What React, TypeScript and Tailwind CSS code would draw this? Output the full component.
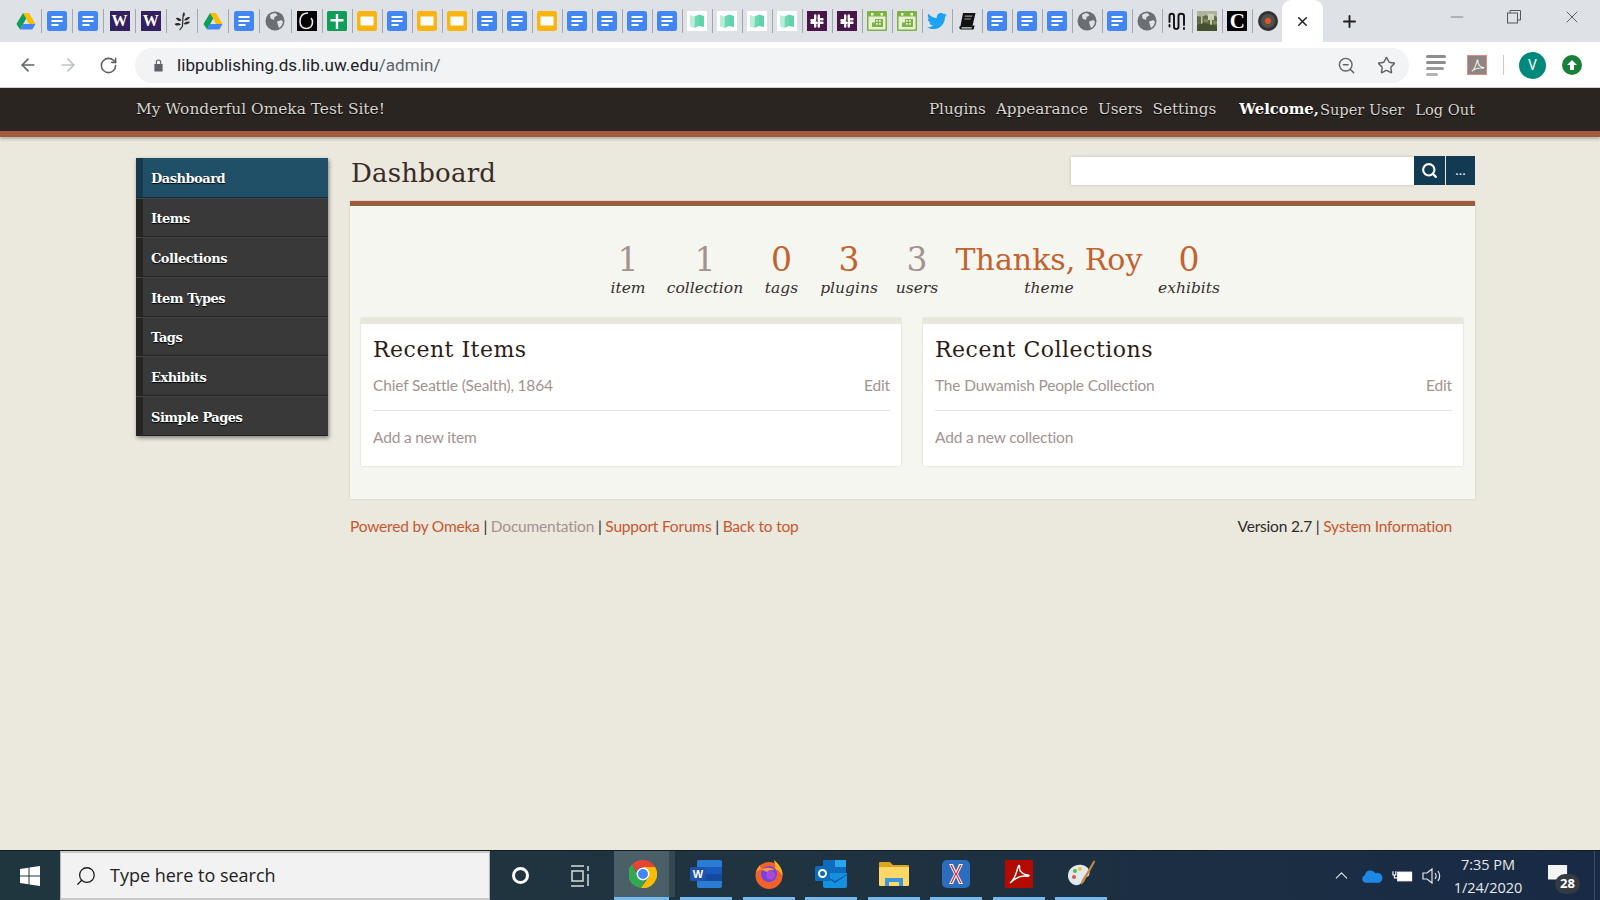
import { ArrowLeft, ArrowRight, ChevronUp, Minus, Plus, RotateCw, Search, Star, X, ZoomOut } from "lucide-react";
import { FaTwitter } from "react-icons/fa";

const slab = "font-['DejaVu_Serif','Liberation_Serif',serif]";
const body = "font-['Lato','Open_Sans',sans-serif]";

function Drive() {
  return (
    <svg viewBox="0 0 20 20" className="h-5 w-5">
      <path d="M7 2h6l6.500 11h-6.500z" fill="#fbbc04" />
      <path d="M7 2l3.200 5.500L4 18.500 0.500 13z" fill="#0f9d58" />
      <path d="M4 18.500l3-5.500h12.500L16.300 18.500z" fill="#4285f4" />
    </svg>
  );
}

function Doc() {
  return (
    <svg viewBox="0 0 20 20" className="h-5 w-5">
      <rect x="0" y="0" width="20" height="20" rx="2.500" fill="#4285f4" />
      <path d="M4.500 5h11v2h-11zM4.500 9h11v2h-11zM4.500 13h7v2h-7z" fill="#fff" />
    </svg>
  );
}

function Slides() {
  return (
    <svg viewBox="0 0 20 20" className="h-5 w-5">
      <rect x="0" y="0" width="20" height="20" rx="2.500" fill="#f9b40f" />
      <rect x="3.500" y="5.500" width="13" height="9" fill="#fff" />
    </svg>
  );
}

function UW() {
  return (
    <div className="flex h-5 w-5 items-center justify-center bg-[#33205f] font-['Liberation_Serif',serif] text-[16px] font-bold text-white">
      W
    </div>
  );
}

function Plant() {
  return (
    <svg viewBox="0 0 20 20" className="h-5 w-5" fill="#2a2a2a">
      <path d="M12 1c1.500 2 1 4-1 5.500C10 5 10.500 2.500 12 1zM4 7c2.500-.5 4.500.5 5.500 2.500C7 10.500 5 9.500 4 7zM18 6c-1 2.500-3 4-6 3.500C13 7 15.500 5.500 18 6zM2.500 13c2.500-1.500 5-1 6.500.5-2.500 1.500-5 1.500-6.500-.5zM18 11c-1.500 2-4 3-6.500 2 1.500-2 4-3 6.500-2zM10.500 5h1.200l-.7 10.500L8 19.500l-.8-.7 2.600-3.600z" />
    </svg>
  );
}

function Globe() {
  return (
    <svg viewBox="0 0 20 20" className="h-5 w-5">
      <circle cx="10" cy="10" r="9.500" fill="#6b6f74" />
      <path d="M5 4c2-1.500 4-2 6-1.500l1.500 2-3 1.500-.5 3-3.500-1.500zM12 10.500l4.500-1.500 1.500 2c-.5 3-2 5-4 6l-1.200-3.200z" fill="#dee1e6" />
    </svg>
  );
}

function SwirlG() {
  return (
    <svg viewBox="0 0 20 20" className="h-5 w-5">
      <rect width="20" height="20" fill="#000" />
      <path d="M11 2C5 2 3 6 3 10.500 3 15 5.500 17.500 9.500 17.500c3.500 0 6-2.500 6-6.500 0-1.500-.5-3-1.500-4" fill="none" stroke="#e8e8e8" strokeWidth="1.600" />
    </svg>
  );
}

function LetterC() {
  return (
    <div className="flex h-5 w-5 items-center justify-center bg-black font-['Liberation_Serif',serif] text-[21px] leading-none font-bold text-white">
      C
    </div>
  );
}

function GreenCross() {
  return (
    <svg viewBox="0 0 20 20" className="h-5 w-5">
      <rect width="20" height="20" rx="1.500" fill="#0f9d58" />
      <path d="M8.800 3h2.400v5h5.300v2.400h-5.300V18H8.800v-7.600H3.500V8h5.300z" fill="#fff" />
    </svg>
  );
}

function MapFold() {
  return (
    <svg viewBox="0 0 20 20" className="h-5 w-5">
      <rect width="20" height="20" fill="#fff" />
      <path d="M3 4l4.500 1.500v11.500L3 15.500z" fill="#b9ecd9" />
      <path d="M7.500 5.500L12 3.500v11.500l-4.500 2z" fill="#6fd8b2" />
      <path d="M12 3.500l5 1.500v11l-5-1z" fill="#5fd3a9" />
    </svg>
  );
}

function Slack() {
  return (
    <svg viewBox="0 0 20 20" className="h-5 w-5">
      <rect width="20" height="20" fill="#4a154b" />
      <g fill="none" stroke="#fff" strokeWidth="2.400" strokeLinecap="round">
        <path d="M8.200 4.500v3.500M11.800 4.500v5M4.500 9.200h3.500M15.500 8.200h-1.500M4.500 11.800h5M11.800 11.800h3.700M8.200 15.500v-1.500M11.800 12.500v3" />
      </g>
    </svg>
  );
}

function Calendar() {
  return (
    <svg viewBox="0 0 20 20" className="h-5 w-5">
      <rect width="20" height="20" rx="1" fill="#7cb342" />
      <rect x="1.500" y="5.500" width="17" height="13" fill="#e8efd8" />
      <path d="M4 2h2.500v2.500H4zM13.500 2H16v2.500h-2.500z" fill="#eef3e2" />
      <path d="M8 8h8v8H5v-4.500h3zM9 9v1.800h1.800V9zM12 9v1.800h1.800V9zM9 12v1.800h1.800V12zM12 12v1.800h1.800V12z" fill="#7cb342" />
    </svg>
  );
}

function Book() {
  return (
    <svg viewBox="0 0 20 20" className="h-5 w-5">
      <path d="M6 2h12.500l-3 13H3.500z" fill="#111" />
      <path d="M3.500 15H16l1-1 .5 1-1 3.500H4c-2 0-2-3.500-.5-3.500z" fill="#111" />
      <path d="M4.500 16.200H15l-.5 1.300H4.500z" fill="#ddd" />
      <path d="M8 4.500h7.500l-.3 1.300H7.700zM7.500 7.500h6.500l-.3 1.100H7.200z" fill="#999" />
    </svg>
  );
}

function MTrail() {
  return (
    <svg viewBox="0 0 20 20" className="h-5 w-5" fill="none" stroke="#111" strokeWidth="1.900" strokeLinecap="round">
      <path d="M2.500 11V5c0-3 4.500-3 4.500 0v11c0 2.500 4.500 2.500 4.500 0V5c0-3 5.500-3 5.500 0v9" />
      <path d="M2.500 14v1.500M17 17v1" />
    </svg>
  );
}

function Photo() {
  return (
    <svg viewBox="0 0 20 20" className="h-5 w-5">
      <rect width="20" height="20" fill="#5f6b48" />
      <path d="M0 0h20v6l-4-2-3 3-4-3-4 2-5-1z" fill="#aeb59c" />
      <path d="M11 3h6v6h-6z" fill="#cfd2c0" />
      <path d="M4 6h1.500v14H4zM13 6h2v14h-2z" fill="#cbc3a8" />
      <path d="M0 14l7-2 13 3v5H0z" fill="#46502f" />
      <path d="M7 8h4v3H7zM16 10h4v3h-4z" fill="#7c8a5e" />
    </svg>
  );
}

function Vinyl() {
  return (
    <svg viewBox="0 0 20 20" className="h-5 w-5">
      <circle cx="10" cy="10" r="10" fill="#333" />
      <circle cx="10" cy="10" r="7" fill="#505050" />
      <circle cx="10" cy="10" r="3" fill="#e2571e" />
    </svg>
  );
}

const favicons = [
  "drive", "doc", "doc", "uw", "uw", "plant", "drive", "doc", "globe", "g", "cross", "slides", "doc", "slides",
  "slides", "doc", "doc", "slides", "doc", "doc", "doc", "doc", "map", "map", "map", "map", "slack", "slack",
  "cal", "cal", "twitter", "book", "doc", "doc", "doc", "globe", "doc", "globe", "m", "photo", "c", "vinyl",
];

function Favicon({ kind }: { kind: string }) {
  switch (kind) {
    case "drive":
      return <Drive />;
    case "doc":
      return <Doc />;
    case "uw":
      return <UW />;
    case "plant":
      return <Plant />;
    case "globe":
      return <Globe />;
    case "g":
      return <SwirlG />;
    case "cross":
      return <GreenCross />;
    case "slides":
      return <Slides />;
    case "map":
      return <MapFold />;
    case "slack":
      return <Slack />;
    case "cal":
      return <Calendar />;
    case "twitter":
      return <FaTwitter className="h-5 w-5 text-[#1da1f2]" />;
    case "book":
      return <Book />;
    case "m":
      return <MTrail />;
    case "photo":
      return <Photo />;
    case "c":
      return <LetterC />;
    default:
      return <Vinyl />;
  }
}

function TabStrip() {
  return (
    <div className="flex h-[42px] shrink-0 items-center bg-[#dee1e6] pl-[10.900px]">
      {favicons.map((kind, i) => (
        <div
          key={i}
          className={
            i === favicons.length - 1
              ? "flex h-6 w-[30px] items-center justify-center"
              : i < 10
                ? "flex h-6 w-[31.200px] items-center justify-center border-r border-[#a3a6aa]"
                : "flex h-6 w-[30px] items-center justify-center border-r border-[#a3a6aa]"
          }
        >
          <Favicon kind={kind} />
        </div>
      ))}
      <div className="ml-[-1px] flex h-[42px] w-[41px] items-center justify-center rounded-t-[9px] bg-white">
        <X className="h-[15px] w-[15px] text-[#202124]" strokeWidth={2.400} />
      </div>
      <Plus className="ml-[17px] h-[19px] w-[19px] text-[#202124]" strokeWidth={2.400} />
      <div className="ml-auto flex items-start self-start pt-[7px] text-[#6f7276]">
        <Minus className="mr-[40px] h-[20px] w-[20px]" strokeWidth={1} />
        <svg viewBox="0 0 14 14" className="mr-[41px] mt-[3px] h-[14px] w-[14px]" fill="none" stroke="#55585c" strokeWidth="1">
          <rect x="0.500" y="3" width="10" height="10" />
          <path d="M3 3V0.500h10.500V10H10.500" />
        </svg>
        <X className="mr-[18px] h-[20px] w-[20px] text-[#44474b]" strokeWidth={1} />
      </div>
    </div>
  );
}

function Toolbar() {
  return (
    <div className="flex h-[46px] shrink-0 items-center border-b border-[#cfd1d4] bg-white pl-[18px] pt-px font-['Roboto',sans-serif]">
      <ArrowLeft className="h-5 w-5 text-[#5f6368]" strokeWidth={2} />
      <ArrowRight className="ml-[20px] h-5 w-5 text-[#bdc1c6]" strokeWidth={2} />
      <RotateCw className="ml-[21px] h-[19px] w-[19px] text-[#5f6368]" strokeWidth={2} />
      <div className="ml-[17px] flex h-[35px] w-[1274px] items-center rounded-full bg-[#f1f3f4] pl-[18px]">
        <svg viewBox="0 0 12 14" className="h-[14px] w-[11px]" fill="#5f6368">
          <path d="M3 6V4a3 3 0 0 1 6 0v2h1.500v8h-9V6zm1.200 0h3.600V4a1.800 1.800 0 0 0-3.600 0z" />
        </svg>
        <span className="ml-[13px] text-[17px] leading-none tracking-[0.100px] text-[#202124]">
          libpublishing.ds.lib.uw.edu<span className="text-[#5f6368]">/admin/</span>
        </span>
        <ZoomOut className="ml-auto h-[19px] w-[19px] text-[#5f6368]" strokeWidth={1.800} />
        <Star className="ml-[21px] mr-[13px] h-[19px] w-[19px] text-[#5f6368]" strokeWidth={1.800} />
      </div>
      <div className="ml-[17px] flex w-[20px] flex-col gap-[3px]">
        <div className="h-[3px] w-[20px] rounded-full bg-[#8d8d8d]" />
        <div className="h-[3px] w-[20px] rounded-full bg-[#8d8d8d]" />
        <div className="h-[3px] w-[18px] rounded-full bg-[#9a9a9a]" />
        <div className="h-[3px] w-[12px] rounded-full bg-[#b5b5b5]" />
      </div>
      <div className="ml-[21px] flex h-5 w-5 items-center justify-center border border-[#e58a7e] bg-[#8e8583]">
        <svg viewBox="0 0 16 16" className="h-[15px] w-[15px]" fill="none" stroke="#f0eeee" strokeWidth="1.200">
          <path d="M2 14c2-1 4-5 5.500-11 .3-1.500 1.200-1 1 .5C8.200 7 11 10 14 10c1 0 1 1-.5 .8C10 10.500 5 11.500 2 14z" />
        </svg>
      </div>
      <div className="ml-[16px] h-[20px] w-px bg-[#c8cacc]" />
      <div className="ml-[15px] flex h-[27px] w-[27px] items-center justify-center rounded-full bg-[#00897b] text-[14px] text-white">
        V
      </div>
      <div className="ml-[16px] flex h-5 w-5 items-center justify-center rounded-full bg-[#188038]">
        <svg viewBox="0 0 12 12" className="h-3 w-3" fill="#fff">
          <path d="M6 1l5 5H8v5H4V6H1z" />
        </svg>
      </div>
    </div>
  );
}

function TopNav() {
  return (
    <div className={`flex h-[49px] shrink-0 items-center justify-between border-b-[6px] border-[#a05a3e] bg-[#2b2522] pl-[136px] pr-[125px] text-[#d9d5cf] shadow-[0_2px_3px_rgba(0,0,0,0.25)] [text-shadow:0_1px_1px_#000] ${slab}`}>
      <span className="text-[15.400px]">My Wonderful Omeka Test Site!</span>
      <div className="flex items-center text-[15.200px]">
        <span>Plugins</span>
        <span className="ml-[10px]">Appearance</span>
        <span className="ml-[10px]">Users</span>
        <span className="ml-[10px]">Settings</span>
        <span className="ml-[23px] text-[14.800px] font-bold text-white">Welcome,</span>
        <span className="ml-[1px] text-[14.600px]">Super User</span>
        <span className="ml-[11px] text-[14.600px]">Log Out</span>
      </div>
    </div>
  );
}

const menu = ["Dashboard", "Items", "Collections", "Item Types", "Tags", "Exhibits", "Simple Pages"];

function Sidebar() {
  return (
    <div className={`mt-[21px] w-[192px] shrink-0 self-start shadow-[1px_2px_4px_rgba(0,0,0,0.45)] ${slab}`}>
      {menu.map((label, i) => (
        <div
          key={label}
          className={
            i === 0
              ? "flex h-[39.700px] border-b border-[#12303f] bg-[#205068]"
              : "flex h-[39.700px] border-b border-t border-b-[#222222] border-t-[#444444] bg-[#393939]"
          }
        >
          <div className={i === 0 ? "w-[7px] bg-[#173a4c]" : "w-[7px] bg-[#262626]"} />
          <span className="ml-[8px] self-center pt-[3px] text-[13px] font-bold tracking-[-0.500px] text-white [text-shadow:0_1px_1px_#000]">
            {label}
          </span>
        </div>
      ))}
    </div>
  );
}

const stats = [
  { value: "1", label: "item", tone: "text-[33px] text-[#a39390]", width: "w-[62px]" },
  { value: "1", label: "collection", tone: "text-[33px] text-[#a39390]", width: "w-[92px]" },
  { value: "0", label: "tags", tone: "text-[33px] text-[#c4622f]", width: "w-[61px]" },
  { value: "3", label: "plugins", tone: "text-[33px] text-[#c4622f]", width: "w-[74px]" },
  { value: "3", label: "users", tone: "text-[33px] text-[#a39390]", width: "w-[62px]" },
  { value: "Thanks, Roy", label: "theme", tone: "text-[30px] text-[#c4622f]", width: "w-[202px]" },
  { value: "0", label: "exhibits", tone: "text-[33px] text-[#c4622f]", width: "w-[78px]" },
];

function Stats() {
  return (
    <div className={`mt-[33px] flex justify-center ${slab}`}>
      {stats.map((s) => (
        <div key={s.label} className={`flex flex-col items-center ${s.width}`}>
          <span className={`leading-[42px] ${s.tone}`}>{s.value}</span>
          <span className="-mt-[2px] text-[15.500px] leading-[18px] text-[#33302d] italic">{s.label}</span>
        </div>
      ))}
    </div>
  );
}

function RecentCard({ title, item, add }: { title: string; item: string; add: string }) {
  return (
    <div className="h-[148px] w-[540px] rounded-[1px] border-t-[6px] border-[#e9e7da] bg-white pl-[12px] pr-[11px] shadow-[0_0_2px_rgba(0,0,0,0.2)]">
      <h2 className={`mt-[11px] text-[22px] leading-[30px] tracking-[0.500px] text-[#2c1d18] ${slab}`}>{title}</h2>
      <div className={`mt-[8px] flex justify-between border-b border-[#e4e4e2] pb-[13px] text-[15.500px] leading-[24px] tracking-[-0.170px] text-[#a39390] ${body}`}>
        <span>{item}</span>
        <span>Edit</span>
      </div>
      <div className={`mt-[14px] text-[15.500px] leading-[24px] tracking-[-0.170px] text-[#a39390] ${body}`}>{add}</div>
    </div>
  );
}

function Content() {
  return (
    <div className="w-[1125px] shrink-0">
      <div className="flex h-[64px] items-start justify-between">
        <h1 className={`mt-[18px] ml-[1px] text-[26px] leading-[36px] tracking-[0.200px] text-[#3a2b28] ${slab}`}>Dashboard</h1>
        <div className="mt-[19px] flex">
          <div className="mt-px h-[28px] w-[343px] bg-white shadow-[0_0_3px_rgba(0,0,0,0.2)]" />
          <div className="flex h-[29px] w-[31px] items-center justify-center bg-[#123a52]">
            <Search className="h-[17px] w-[17px] text-white" strokeWidth={3} />
          </div>
          <div className="ml-px flex h-[29px] w-[29px] items-center justify-center bg-[#123a52] text-[13px] text-white">
            ...
          </div>
        </div>
      </div>
      <div className="h-[298px] border-t-[5px] border-[#a05a3e] bg-[#f6f6f1] shadow-[0_0_2px_rgba(0,0,0,0.15)]">
        <Stats />
        <div className="mt-[21px] flex gap-[22px] pl-[11px]">
          <RecentCard title="Recent Items" item="Chief Seattle (Sealth), 1864" add="Add a new item" />
          <RecentCard title="Recent Collections" item="The Duwamish People Collection" add="Add a new collection" />
        </div>
      </div>
      <div className={`mt-[15px] flex justify-between pr-[23px] text-[15.500px] leading-[24px] tracking-[-0.200px] text-[#2b2b2b] ${body}`}>
        <div>
          <span className="text-[#c8572d]">Powered by Omeka</span> | <span className="text-[#a39390]">Documentation</span> |{" "}
          <span className="text-[#c8572d]">Support Forums</span> | <span className="text-[#c8572d]">Back to top</span>
        </div>
        <div>
          Version 2.7 | <span className="text-[#c8572d]">System Information</span>
        </div>
      </div>
    </div>
  );
}

function WindowsLogo() {
  return (
    <svg viewBox="0 0 20 20" className="h-[20px] w-[20px]" fill="#fff">
      <path d="M0 3l8.500-1.200v7.700H0zM9.500 1.600L20 0v9.500H9.500zM0 10.500h8.500v7.700L0 17zM9.500 10.500H20V20L9.500 18.400z" />
    </svg>
  );
}

function ChromeIcon() {
  return (
    <svg viewBox="0 0 28 28" className="h-[28px] w-[28px]">
      <path d="M14 0a14 14 0 0 1 12.100 7H14a7 7 0 0 0-6.500 4.500L3 4.500A14 14 0 0 1 14 0z" fill="#ea4335" />
      <path d="M3 4.500l5 9a7 7 0 0 0 8 7.200L12 28A14 14 0 0 1 3 4.500z" fill="#34a853" />
      <path d="M26.100 7A14 14 0 0 1 12 28l5.500-8a7 7 0 0 0 1.300-9.500L14 7z" fill="#fbbc04" />
      <circle cx="14" cy="14" r="6.500" fill="#fff" />
      <circle cx="14" cy="14" r="5" fill="#4285f4" />
    </svg>
  );
}

function WordIcon() {
  return (
    <svg viewBox="0 0 32 28" className="h-[28px] w-[32px]">
      <rect x="7" y="0" width="25" height="28" rx="2" fill="#2b7cd3" />
      <rect x="7" y="7" width="25" height="7" fill="#185abd" />
      <rect x="7" y="14" width="25" height="7" fill="#144a9e" />
      <rect x="0" y="7" width="16" height="14" rx="1.500" fill="#1d52ae" />
      <text x="8" y="18" textAnchor="middle" fontSize="11" fontWeight="700" fill="#fff" fontFamily="Liberation Sans, sans-serif">W</text>
    </svg>
  );
}

function FirefoxIcon() {
  return (
    <svg viewBox="0 0 30 30" className="h-[30px] w-[30px]">
      <circle cx="15" cy="16.500" r="13.500" fill="#f2612a" />
      <path d="M20 1c5 4 9 9 8.500 16-2-4-4-6-7-7 0-3-1-6-1.500-9z" fill="#ffb21f" />
      <path d="M2 14c0-3 2-6 4-8 0 2 1 3 2 4-4 1-5 2-6 4z" fill="#ff9a2b" />
      <circle cx="15" cy="15" r="8" fill="#7542e5" />
      <circle cx="16.500" cy="16" r="4.500" fill="#a54bd8" />
      <path d="M7 11c4-3 10-3 14 0-4-.5-6 0-8 2-2-1-4-2-6-2z" fill="#ff9a2b" />
    </svg>
  );
}

function OutlookIcon() {
  return (
    <svg viewBox="0 0 32 28" className="h-[28px] w-[32px]">
      <rect x="8" y="0" width="23" height="14" fill="#0f6cbd" />
      <rect x="20" y="0" width="11" height="7" fill="#28a8ea" />
      <path d="M8 13h24v13a2 2 0 0 1-2 2H10a2 2 0 0 1-2-2z" fill="#1490df" />
      <path d="M8 14l12 7 12-7v1L20 23 8 15z" fill="#0a5ca8" />
      <rect x="0" y="6" width="15" height="15" rx="1.500" fill="#0f6cbd" />
      <circle cx="7.500" cy="13.500" r="3.500" fill="none" stroke="#fff" strokeWidth="2" />
    </svg>
  );
}

function FolderIcon() {
  return (
    <svg viewBox="0 0 30 26" className="h-[26px] w-[30px]">
      <path d="M0 2a1 1 0 0 1 1-1h10l3 3h15a1 1 0 0 1 1 1v4H0z" fill="#d9a520" />
      <rect x="0" y="6" width="30" height="19" rx="1" fill="#ffd766" />
      <path d="M6 25v-8h18v8h-4v-4H10v4z" fill="#3a96dd" />
    </svg>
  );
}

function XIcon() {
  return (
    <svg viewBox="0 0 28 28" className="h-[28px] w-[28px]">
      <rect width="28" height="28" rx="5" fill="#2d6dbd" />
      <path d="M7 4h4l3 7 3-7h4l-5 10 5 10h-4l-3-7-3 7H7l5-10z" fill="#f4f6fa" />
      <path d="M8.500 5H10l4 8.500L18 5h1.500L15 14l4.500 9H18l-4-8.500L10 23H8.500L13 14z" fill="#e32a27" />
    </svg>
  );
}

function PdfIcon() {
  return (
    <svg viewBox="0 0 28 28" className="h-[28px] w-[28px]">
      <rect width="28" height="28" rx="1" fill="#b30b00" />
      <path d="M5 23c3-2 6-8 8-16 .4-2 2-2 1.500 .5C14 11 18 15 23 15c1.500 0 1.500 1.500-.5 1.200C17 15.500 10 18 5 23z" fill="none" stroke="#fff" strokeWidth="1.400" />
    </svg>
  );
}

function PaletteIcon() {
  return (
    <svg viewBox="0 0 30 30" className="h-[30px] w-[30px]">
      <path d="M2 17C2 9 9 5 16 6c6 1 9 6 7 10-1 3-5 1-6 4-1 4-4 7-8 6-4-1-7-5-7-9z" fill="#dfe9ee" />
      <circle cx="8" cy="18" r="2" fill="#e8504a" />
      <circle cx="9" cy="12" r="2" fill="#5fb548" />
      <circle cx="14" cy="10" r="2" fill="#f1c232" />
      <path d="M28 1l1 2-11 20-3 3 .5-4z" fill="#c98a3c" />
    </svg>
  );
}

const taskApps = [
  { icon: <WordIcon />, width: "w-[62px]" },
  { icon: <FirefoxIcon />, width: "w-[63px]" },
  { icon: <OutlookIcon />, width: "w-[62px]" },
  { icon: <FolderIcon />, width: "w-[63px]" },
  { icon: <XIcon />, width: "w-[62px]" },
  { icon: <PdfIcon />, width: "w-[63px]" },
  { icon: <PaletteIcon />, width: "w-[62px]" },
];

function Taskbar() {
  return (
    <div className="flex h-[50px] shrink-0 items-stretch border-t border-[#141d22] bg-gradient-to-r from-[#20363f] via-[#1f3340] to-[#182a45] font-['Open_Sans',sans-serif]">
      <div className="flex w-[60px] items-center justify-center">
        <WindowsLogo />
      </div>
      <div className="flex w-[430px] items-center border-y-2 border-x border-y-[#c9c9c9] border-x-[#b5b5b5] bg-[#f2f2f2] pl-[14px]">
        <Search className="h-[22px] w-[22px] -scale-x-100 text-[#1c1c1c]" strokeWidth={1.400} />
        <span className="ml-[13px] text-[18px] text-[#222]">Type here to search</span>
      </div>
      <div className="flex w-[60px] items-center justify-center">
        <div className="h-[17px] w-[17px] rounded-full border-[3px] border-white" />
      </div>
      <div className="flex w-[60px] items-center justify-center pr-[1px]">
        <svg viewBox="0 0 20 22" className="h-[22px] w-[20px]" fill="none" stroke="#d8dcde" strokeWidth="1.500">
          <path d="M1 1h13M1 21h13M2 6h11v10H2zM18 1v5M18 9v12" />
        </svg>
      </div>
      <div className="ml-[4px] flex w-[55px] items-center justify-center border-b-[3px] border-[#76b9ed] bg-[#4b5f68] pl-[3px]">
        <ChromeIcon />
      </div>
      <div className="w-[6px] border-b-[3px] border-[#1f3340] bg-[#35484f]" />
      {taskApps.map((app, i) => (
        <div key={i} className={`flex items-center justify-center ${app.width}`}>
          <div className="flex h-full w-[52px] items-center justify-center border-b-[3px] border-[#76b9ed]">{app.icon}</div>
        </div>
      ))}
      <div className="ml-auto flex items-center text-white">
        <ChevronUp className="h-[21px] w-[21px] text-[#e6e6e6]" strokeWidth={1.300} />
        <svg viewBox="0 0 22 14" className="ml-[10px] h-[14px] w-[21px]">
          <path d="M4 14a4 4 0 0 1-1-7.800A6 6 0 0 1 14 4a4.500 4.500 0 0 1 4 10z" fill="#1e88e5" />
        </svg>
        <svg viewBox="0 0 22 14" className="ml-[9px] h-[14px] w-[21px]" fill="none" stroke="#fff" strokeWidth="1.200">
          <rect x="6" y="3" width="14.500" height="9" fill="#fff" />
          <path d="M1 2v4h3V2M2.500 6v3H6" />
        </svg>
        <svg viewBox="0 0 20 18" className="ml-[9px] h-[18px] w-[20px]" fill="none" stroke="#e6e6e6" strokeWidth="1.200">
          <path d="M1 6h4l5-4v14l-5-4H1zM13 6c1.500 2 1.500 4 0 6M16 4c2 3 2 7 0 10" />
        </svg>
        <div className="ml-[1px] flex w-[90px] flex-col items-center text-[14.500px] leading-[23px] text-[#e8e8e8]">
          <span>7:35 PM</span>
          <span>1/24/2020</span>
        </div>
        <div className="relative ml-[15px] h-[26px] w-[22px] pt-[2px]">
          <svg viewBox="0 0 22 22" className="h-[20px] w-[20px]" fill="#f4f4f4">
            <path d="M0 0h21v16h-6l-3 4v-4H0z" />
          </svg>
          <div className="absolute left-[7px] top-[11px] flex h-[20px] w-[25px] items-center justify-center rounded-full bg-[#333a40] text-[13px] font-bold text-white">
            28
          </div>
        </div>
        <div className="ml-[24px] h-full w-px bg-[#3a4a60]" />
        <div className="w-[5px]" />
      </div>
    </div>
  );
}

export default function App() {
  return (
    <div className="flex h-[900px] w-[1600px] flex-col overflow-hidden bg-[#ebe8de]">
      <TabStrip />
      <Toolbar />
      <TopNav />
      <div className="flex flex-1 gap-[22px] pl-[136px]">
        <Sidebar />
        <Content />
      </div>
      <Taskbar />
    </div>
  );
}
